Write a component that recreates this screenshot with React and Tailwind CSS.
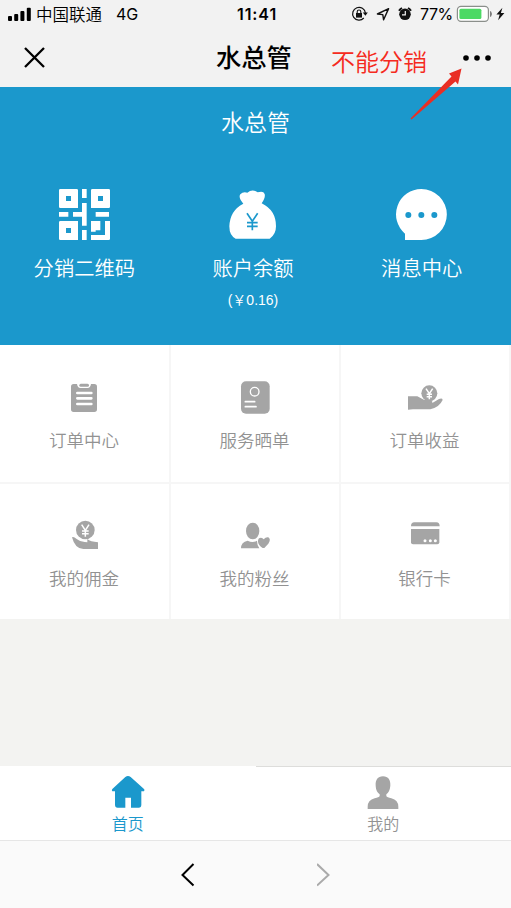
import React from "react";

function Signal() {
  return (
    <svg className="ml-2 h-[14px] w-[23px] shrink-0" viewBox="0 0 23 14" fill="#000">
      <rect x="0" y="9" width="4" height="5" rx="1" />
      <rect x="6.2" y="7" width="4" height="7" rx="1" />
      <rect x="12.4" y="4" width="4" height="10" rx="1" />
      <rect x="18.8" y="0.8" width="4" height="13.2" rx="1" />
    </svg>
  );
}

function StatusIcons() {
  return (
    <svg className="absolute top-0 left-[350px] h-7 w-[70px]" viewBox="350 0 70 28">
      <path d="M363.8 18 A6.4 6.4 0 1 1 365.4 13" fill="none" stroke="#111" strokeWidth="1.2" />
      <path d="M362.8 12.4h5l-2.4 3.4z" fill="#111" />
      <rect x="356" y="13" width="6" height="4.6" fill="#111" />
      <path d="M357.2 13v-1.2a1.8 1.8 0 0 1 3.6 0V13" fill="none" stroke="#111" strokeWidth="1.1" />
      <path d="M388.6 8.6 377.4 14l5.4.6.8 5.2z" fill="none" stroke="#111" strokeWidth="1.4" strokeLinejoin="round" />
      <circle cx="405" cy="14.3" r="5.8" fill="#111" />
      <path d="M399 10.8a9 9 0 0 1 3-2.8M411 10.8a9 9 0 0 0-3-2.8" stroke="#111" strokeWidth="2" fill="none" />
      <path d="M405.3 11V14.8H402" fill="none" stroke="#f3f3f3" strokeWidth="1.2" />
    </svg>
  );
}

function Battery() {
  return (
    <svg className="absolute top-0 left-[455px] h-7 w-[52px]" viewBox="455 0 52 28">
      <rect x="457.4" y="6.4" width="31" height="15" rx="3.6" fill="#fff" stroke="#8b8f8b" strokeWidth="1.2" />
      <rect x="459.4" y="8.8" width="22" height="10.2" rx="1.5" fill="#4cd964" />
      <path d="M490.6 11.5q1.6 2.4 0 5z" fill="#777" stroke="#777" />
      <path d="m502.4 7.8-6 6.8h3.3l-1.6 5.6 6.3-7.2h-3.5z" fill="#111" />
    </svg>
  );
}

function QrIcon() {
  return (
    <svg className="h-[51px] w-[51px]" viewBox="0 0 153 153" fill="#fff">
      <path fillRule="evenodd" d="M4 0H53q4 0 4 4V57H4q-4 0-4-4V4q0-4 4-4zM21 21V36H36V21z" />
      <path fillRule="evenodd" d="M100 0H149q4 0 4 4V53q0 4-4 4H96V4q0-4 4-4zM117 21V36H132V21z" />
      <path fillRule="evenodd" d="M4 96H57V153H4q-4 0-4-4V100q0-4 4-4zM21 117V132H36V117z" />
      <path d="M69 0H83V27H69zM69 42H83V110H69zM69 123H83V153H69zM0 69H28V83H0zM42 69H83V83H42zM110 69H150V83H110z" />
      <path d="M96 96H124V124H96zM138 96H153V149q0 4-4 4H110V138H138zM96 138H110V153H96zM96 124H110V128H96z" />
    </svg>
  );
}

function BagIcon() {
  return (
    <svg className="h-[51px] w-[48px]" viewBox="0 0 144 153">
      <path
        d="M43 44Q27 26 34 16q8-9 21-5Q70-2 86 10q17-6 21 5 3 11-9 28Q141 64 141 112 141 137 122 149H20Q1 140 1 112 3 64 43 44z"
        fill="#fff"
      />
      <path d="M54 73 70 97 86 73M70 97V124M54 101H86M54 112H86" stroke="#1b98cc" strokeWidth="5" fill="none" />
    </svg>
  );
}

function ChatIcon() {
  return (
    <svg className="h-[51px] w-[51px]" viewBox="0 0 153 153">
      <path d="M76 0A76 76 0 0 1 76 153H27V134A76 76 0 0 1 76 0z" fill="#fff" />
      <g fill="#1b98cc">
        <circle cx="37" cy="78" r="9" />
        <circle cx="76" cy="78" r="9" />
        <circle cx="115" cy="78" r="9" />
      </g>
    </svg>
  );
}

function OrderIcon() {
  return (
    <svg className="h-[36px] w-[36px]" viewBox="0 0 108 108">
      <path d="M23 15H33Q35 27 43 27H65Q73 27 75 15H85Q93 15 93 23V91Q93 99 85 99H23Q15 99 15 91V23Q15 15 23 15z" fill="#a5a5a5" />
      <rect x="40" y="14" width="29" height="9" rx="4.5" fill="#a5a5a5" />
      <path d="M34 42H76M34 58H76M34 75H76" stroke="#fff" strokeWidth="8" strokeLinecap="round" />
    </svg>
  );
}

function ServiceIcon() {
  return (
    <svg className="h-[36px] w-[36px]" viewBox="0 0 108 108">
      <rect x="12" y="7" width="86" height="97" rx="15" fill="#a5a5a5" />
      <circle cx="53" cy="38" r="13" fill="none" stroke="#fff" strokeWidth="4" />
      <path d="M25 68H53M25 83H57" stroke="#fff" strokeWidth="5" strokeLinecap="round" />
    </svg>
  );
}

function IncomeIcon() {
  return (
    <svg className="h-[36px] w-[36px]" viewBox="0 0 108 108">
      <circle cx="67" cy="43" r="24" fill="#a5a5a5" />
      <path d="m57 29 10 15 10-15M67 44v17M59 46h16M59 53h16" stroke="#fff" strokeWidth="4.5" fill="none" />
      <path d="M3 52H31L52 63H65Q78 64 76 72L96 60Q106 56 107 63 96 86 70 91H18L3 92z" fill="#a5a5a5" />
    </svg>
  );
}

function CommissionIcon() {
  return (
    <svg className="h-[36px] w-[36px]" viewBox="0 0 108 108">
      <circle cx="58" cy="39" r="28" fill="#a5a5a5" />
      <path d="m47 23 11 17 11-17M58 40v19M48 42h20M48 50h20" stroke="#fff" strokeWidth="4.5" fill="none" />
      <path d="M18 61Q22 57 32 66 43 75 56 75L64 76V66Q73 74 96 76V96H52Q27 96 18 61z" fill="#a5a5a5" />
    </svg>
  );
}

function FansIcon() {
  return (
    <svg className="h-[36px] w-[36px]" viewBox="0 0 108 108" fill="#a5a5a5">
      <ellipse cx="47" cy="42" rx="20" ry="25" />
      <path d="M12 94Q12 75 32 71 47 79 60 71 60 84 67 94z" />
      <path d="M80 67Q87 59 94 61 103 67 94 80L82 93H77Q65 86 63 75 62 62 72 62 77 63 80 67z" />
    </svg>
  );
}

function CardIcon() {
  return (
    <svg className="h-[36px] w-[36px]" viewBox="0 0 108 108">
      <path d="M22 16H88Q98 16 98 28H12Q12 16 22 16z" fill="#a5a5a5" />
      <path d="M12 36H97V76Q97 82 91 82H18Q12 82 12 76z" fill="#a5a5a5" />
      <g fill="#fff">
        <circle cx="54" cy="71" r="4.5" />
        <circle cx="70" cy="71" r="4.5" />
        <circle cx="85" cy="71" r="4.5" />
      </g>
    </svg>
  );
}

const actions = [
  { label: "分销二维码", Icon: QrIcon },
  { label: "账户余额", Icon: BagIcon, note: "(￥0.16)" },
  { label: "消息中心", Icon: ChatIcon },
];

const tileRows = [
  [
    { label: "订单中心", Icon: OrderIcon },
    { label: "服务晒单", Icon: ServiceIcon },
    { label: "订单收益", Icon: IncomeIcon },
  ],
  [
    { label: "我的佣金", Icon: CommissionIcon },
    { label: "我的粉丝", Icon: FansIcon },
    { label: "银行卡", Icon: CardIcon },
  ],
];

export default function App() {
  return (
    <div className="relative flex h-[908px] w-[511px] flex-col overflow-hidden bg-[#f3f3f1] font-['Liberation_Sans','Noto_Sans_CJK_SC',sans-serif]">
      <header className="h-[87px] shrink-0 bg-[#f2f2f2] text-black">
        <div className="relative flex h-7 items-center whitespace-nowrap">
          <Signal />
          <span className="ml-[5px] w-20 pt-px text-[16.5px] leading-7 font-[350]">中国联通</span>
          <span className="w-[121px] font-['Inter',sans-serif] text-[16px] leading-7">4G</span>
          <span className="w-[183px] font-['Inter',sans-serif] text-[16px] leading-7 font-semibold tracking-[0.9px]">11:41</span>
          <span className="font-['Inter',sans-serif] text-[16px] leading-7 tracking-[-0.4px]">77%</span>
          <StatusIcons />
          <Battery />
        </div>
        <div className="flex h-[59px] items-center whitespace-nowrap">
          <svg className="ml-6 h-[21px] w-[21px]" viewBox="0 0 21 21" stroke="#000" strokeWidth="2.3">
            <path d="M1 1 20 20M20 1 1 20" />
          </svg>
          <h1 className="ml-[171px] w-[115px] pt-0.5 text-[25.3px] leading-[57px] font-medium">水总管</h1>
          <span className="mt-2.5 w-[131px] text-[24px] leading-[49px] font-[350] text-[#f52a20]">不能分销</span>
          <svg className="h-[6px] w-[30px]" viewBox="0 0 30 6">
            <circle cx="4" cy="3" r="2.8" />
            <circle cx="15" cy="3" r="2.8" />
            <circle cx="26" cy="3" r="2.8" />
          </svg>
        </div>
      </header>

      <section className="h-[258px] shrink-0 bg-[#1b98cc] text-white">
        <h2 className="h-[102px] text-center text-[23px] leading-[72px] font-[350]">水总管</h2>
        <div className="grid w-[506px] grid-cols-3">
          {actions.map(({ label, Icon, note }) => (
            <div key={label} className="flex flex-col items-center">
              <Icon />
              <span className="mt-[13px] text-[20.3px] leading-8 font-[350]">{label}</span>
              {note && <span className="mt-[5px] text-[14px] leading-5 font-[350]">{note}</span>}
            </div>
          ))}
        </div>
      </section>

      <section className="flex shrink-0 flex-col gap-0.5 bg-[#f6f6f6]">
        {tileRows.map((row, i) => (
          <div key={i} className={i === 0 ? "grid h-[137px] grid-cols-[169px_168px_168px] gap-x-[2px]" : "grid h-[135px] grid-cols-[169px_168px_168px] gap-x-[2px]"}>
            {row.map(({ label, Icon }) => (
              <div key={label} className={i === 0 ? "flex flex-col items-center bg-white pt-[34px] pr-px" : "flex flex-col items-center bg-white pt-[33px] pr-px"}>
                <Icon />
                <span className="mt-[11px] text-[17.5px] leading-[30px] font-[350] text-[#929292]">{label}</span>
              </div>
            ))}
          </div>
        ))}
      </section>

      <nav className="mt-auto grid h-[74px] shrink-0 grid-cols-2 bg-white">
        <div className="flex flex-col items-center pt-[9px] text-[#1b98cc]">
          <svg className="h-[34px] w-[34px]" viewBox="0 0 102 102" fill="currentColor">
            <path d="M43 6Q51 0 59 6L99 42Q102 45 99 49H91V89Q91 98 83 98H60V68H43V98H20Q12 98 12 89V49H4Q1 46 4 42z" />
          </svg>
          <span className="mt-[2px] text-[16px] leading-7 font-[350]">首页</span>
        </div>
        <div className="flex flex-col items-center border-t border-[#dddddb] pt-[9px] text-[#a5a5a5]">
          <svg className="h-[34px] w-[34px]" viewBox="0 0 102 102" fill="currentColor">
            <path d="M51 1C67 1 74 12 73 29 72 42 67 51 61 55V60Q63 64 76 67 97 73 97 92V99H5V92Q5 73 26 67 39 64 41 60V55C35 51 29 42 29 29 28 12 35 1 51 1z" />
          </svg>
          <span className="mt-[1px] text-[16px] leading-7 font-[350] text-[#929292]">我的</span>
        </div>
      </nav>

      <footer className="flex h-[68px] shrink-0 items-center gap-[122px] border-t border-[#e6e6e6] bg-[#fafafa] pl-[181px]">
        <svg className="h-6 w-[14px]" viewBox="0 0 14 24" fill="none" stroke="#000" strokeWidth="2">
          <path d="M12.5 1 1.5 12 12.5 22.5" />
        </svg>
        <svg className="h-6 w-[14px]" viewBox="0 0 14 24" fill="none" stroke="#aaa" strokeWidth="2">
          <path d="M0 1 11.5 12 0 22.5" />
        </svg>
      </footer>

      <svg className="absolute top-[66px] left-[408px] h-[56px] w-[56px]" viewBox="408 66 56 56" fill="#e92e24">
        <path d="M461.5 68.5 449 73.5 451.5 76.5 410.5 118.5 411.5 119.5 455.5 81.5 458 84.5z" />
      </svg>
    </div>
  );
}
